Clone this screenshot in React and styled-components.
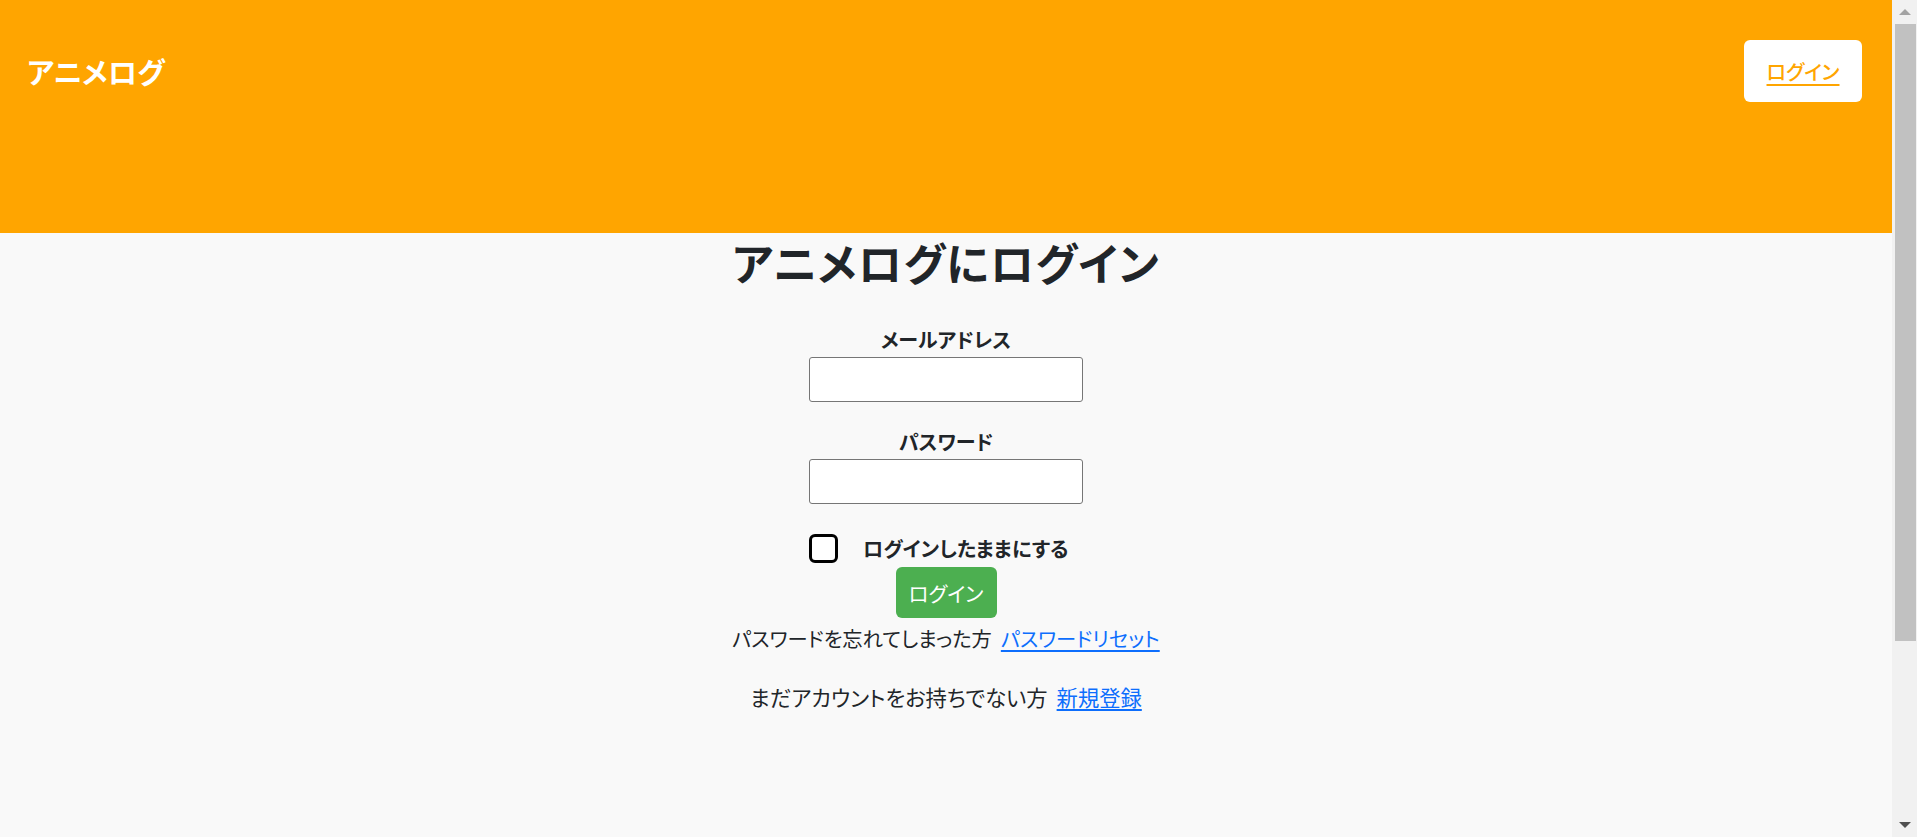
import React from "react";
import styled, { createGlobalStyle } from "styled-components";

const GlobalStyle = createGlobalStyle`
  html, body {
    margin: 0;
    padding: 0;
  }
  body {
    background: #f9f9f9;
    color: #212529;
    font-family: "Noto Sans CJK JP", "Noto Sans", sans-serif;
    font-feature-settings: "palt";
  }
`;

const Page = styled.div`
  min-height: 100vh;
  margin-right: 25px;
  display: flex;
  flex-direction: column;
`;

const Header = styled.header`
  height: 233px;
  box-sizing: border-box;
  background: #ffa500;
  padding: 40px 30px 0 27px;
  display: flex;
  justify-content: space-between;
  align-items: flex-start;
`;

const HeaderRow = styled.div`
  height: 62px;
  display: flex;
  align-items: center;
`;

const Brand = styled.div`
  color: #fff;
  font-size: 29px;
  font-weight: 700;
  line-height: 1;
`;

const HeaderButton = styled.a`
  display: flex;
  align-items: center;
  justify-content: center;
  width: 118px;
  height: 62px;
  background: #fff;
  border-radius: 6px;
  color: #ffa500;
  font-size: 20px;
  font-weight: 500;
  text-decoration: underline;
  text-underline-offset: 4px;
`;

const Main = styled.main`
  display: flex;
  flex-direction: column;
  align-items: center;
`;

const Title = styled.h1`
  margin: 4px 0 0;
  font-size: 44px;
  line-height: 50px;
  font-weight: 700;
  letter-spacing: 1px;
`;

const Field = styled.div`
  display: flex;
  flex-direction: column;
  align-items: center;
  gap: 5px;
  margin-top: ${(p) => p.$top}px;
`;

const Label = styled.label`
  font-size: 20px;
  font-weight: 700;
  line-height: 24px;
`;

const Input = styled.input`
  box-sizing: border-box;
  width: 274px;
  height: 45px;
  border: 1px solid #767676;
  border-radius: 3px;
  background: #fff;
  font-size: 16px;
  padding: 0 8px;
`;

const CheckRow = styled.label`
  width: 274px;
  display: flex;
  align-items: center;
  gap: 25px;
  margin-top: 30px;
  font-size: 20.2px;
  font-weight: 700;
  line-height: 29px;
`;

const Check = styled.input.attrs({ type: "checkbox" })`
  appearance: none;
  margin: 0;
  box-sizing: border-box;
  width: 29px;
  height: 29px;
  border: 3px solid #000;
  border-radius: 6px;
  background: #fff;
`;

const SubmitButton = styled.button`
  margin-top: 4px;
  width: 101px;
  height: 51px;
  border: none;
  border-radius: 6px;
  background: #4caf50;
  color: #fff;
  font-family: inherit;
  font-feature-settings: "palt";
  font-size: 20.5px;
`;

const Note = styled.p`
  margin: ${(p) => p.$top}px 0 0;
  font-size: ${(p) => p.$size}px;
  line-height: 24px;
  display: flex;
  gap: 9px;
`;

const Link = styled.a`
  color: #0d6efd;
  text-decoration: underline;
  text-underline-offset: 3px;
`;

const Scrollbar = styled.div`
  position: fixed;
  top: 0;
  right: 0;
  bottom: 0;
  width: 25px;
  background: #f1f1f1;
  display: flex;
  flex-direction: column;
  align-items: center;
`;

const Arrow = styled.div`
  width: 0;
  height: 0;
  border-left: 6px solid transparent;
  border-right: 6px solid transparent;
  ${(p) =>
    p.$down
      ? "border-top: 6px solid #505050; margin-top: auto; margin-bottom: 9px;"
      : "border-bottom: 6px solid #a3a3a3; margin-top: 9px;"}
`;

const Thumb = styled.div`
  margin-top: 9px;
  width: 21px;
  height: 617px;
  margin-left: 2px;
  background: #c1c1c1;
`;

export default function App() {
  return (
    <>
      <GlobalStyle />
      <Page>
        <Header>
          <HeaderRow>
            <Brand>アニメログ</Brand>
          </HeaderRow>
          <HeaderButton href="#">ログイン</HeaderButton>
        </Header>
        <Main>
          <Title>アニメログにログイン</Title>
          <Field $top={41}>
            <Label htmlFor="email">メールアドレス</Label>
            <Input id="email" type="email" />
          </Field>
          <Field $top={28}>
            <Label htmlFor="password">パスワード</Label>
            <Input id="password" type="password" />
          </Field>
          <CheckRow>
            <Check />
            <span>ログインしたままにする</span>
          </CheckRow>
          <SubmitButton>ログイン</SubmitButton>
          <Note $top={8} $size={20.3}>
            <span>パスワードを忘れてしまった方</span>
            <Link href="#">パスワードリセット</Link>
          </Note>
          <Note $top={35} $size={21.3}>
            <span>まだアカウントをお持ちでない方</span>
            <Link href="#">新規登録</Link>
          </Note>
        </Main>
      </Page>
      <Scrollbar>
        <Arrow />
        <Thumb />
        <Arrow $down />
      </Scrollbar>
    </>
  );
}
